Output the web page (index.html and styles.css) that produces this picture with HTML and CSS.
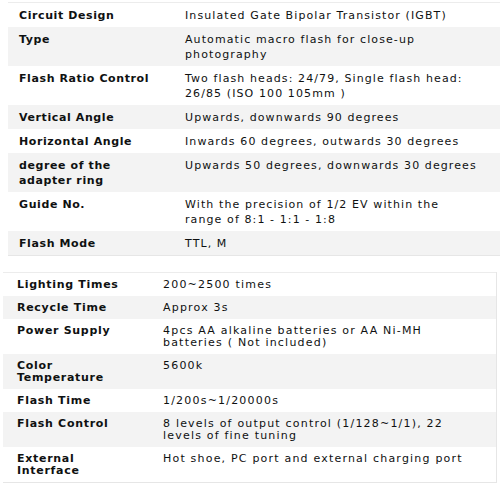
FILE: index.html
```html
<!DOCTYPE html>
<html>
<head>
<meta charset="utf-8">
<link rel="stylesheet" href="styles.css">
</head>
<body>
<table class="spec spec-a">
  <tr><th>Circuit Design</th><td>Insulated Gate Bipolar Transistor (IGBT)</td></tr>
  <tr><th>Type</th><td>Automatic macro flash for close-up photography</td></tr>
  <tr><th>Flash Ratio Control</th><td>Two flash heads: 24/79, Single flash head: 26/85 (ISO 100 105mm )</td></tr>
  <tr><th>Vertical Angle</th><td>Upwards, downwards 90 degrees</td></tr>
  <tr><th>Horizontal Angle</th><td>Inwards 60 degrees, outwards 30 degrees</td></tr>
  <tr><th>degree of the adapter ring</th><td>Upwards 50 degrees, downwards 30 degrees</td></tr>
  <tr><th>Guide No.</th><td>With the precision of 1/2 EV within the range of 8:1 - 1:1 - 1:8</td></tr>
  <tr><th>Flash Mode</th><td>TTL, M</td></tr>
</table>
<table class="spec spec-b">
  <tr><th>Lighting Times</th><td>200~2500 times</td></tr>
  <tr><th>Recycle Time</th><td>Approx 3s</td></tr>
  <tr><th>Power Supply</th><td>4pcs AA alkaline batteries or AA Ni-MH batteries ( Not included)</td></tr>
  <tr><th>Color Temperature</th><td>5600k</td></tr>
  <tr><th>Flash Time</th><td>1/200s~1/20000s</td></tr>
  <tr><th>Flash Control</th><td>8 levels of output control (1/128~1/1), 22 levels of fine tuning</td></tr>
  <tr><th>External Interface</th><td>Hot shoe, PC port and external charging port</td></tr>
</table>
</body>
</html>
```
FILE: styles.css
```css
html, body {
  margin: 0;
  padding: 0;
  background: #ffffff;
}
body {
  font-family: "DejaVu Sans", sans-serif;
  font-size: 11px;
  color: #0f1111;
}
.spec {
  border-collapse: collapse;
  table-layout: fixed;
}
.spec th, .spec td {
  text-align: left;
  vertical-align: top;
}
.spec th {
  font-weight: bold;
}
.spec tr:nth-child(even) {
  background: #f3f3f3;
}
.spec-a {
  margin: 2px 0 0 8px;
  width: 492px;
  line-height: 15px;
  border-top: 1px solid #ececec;
  border-bottom: 1px solid #e6e6e6;
}
.spec-a th {
  width: 144px;
  padding: 5px 11px 4px 11px;
  letter-spacing: 0.6px;
}
.spec-a td {
  padding: 5px 19px 4px 11px;
  letter-spacing: 1.1px;
}
.spec-b {
  margin: 16px 0 0 3px;
  width: 494px;
  line-height: 12px;
  border-top: 1px solid #ececec;
  border-right: 1px solid #e6e6e6;
  border-bottom: 1px solid #e6e6e6;
}
.spec-b th {
  width: 120px;
  padding: 6px 15px 5px 14px;
  letter-spacing: 0.7px;
}
.spec-b td {
  padding: 6px 12px 5px 11px;
  letter-spacing: 1.2px;
}
```
